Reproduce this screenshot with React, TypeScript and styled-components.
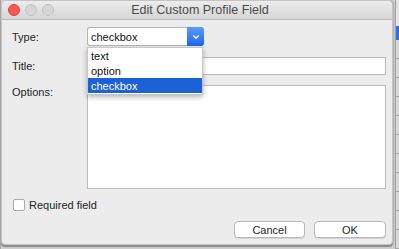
import { createGlobalStyle, styled } from 'styled-components';

const GlobalStyle = createGlobalStyle`
    html, body {
        margin: 0;
        padding: 0;
        width: 399px;
        height: 249px;
        overflow: hidden;
        background: #d6d6d6;
    }
    * {
        box-sizing: border-box;
    }
`;

const font = `'Liberation Sans', Arial, sans-serif`;

interface ItemProps {
    $selected?: boolean;
}

interface ButtonProps {
    $width: number;
}

const App = () => {
    return (
        <Desktop>
            <GlobalStyle />
            <Window>
                <TitleBar>
                    <Lights>
                        <Light color="#fc5753" edge="#de3f3b" />
                        <Light color="#d6d6d6" edge="#c2c2c2" />
                        <Light color="#d6d6d6" edge="#c2c2c2" />
                    </Lights>
                    <Title>Edit Custom Profile Field</Title>
                </TitleBar>

                <Body>
                    <Row>
                        <Label>Type:</Label>
                        <SelectWrap>
                            <Select>
                                <SelectValue>checkbox</SelectValue>
                                <SelectButton>
                                    <svg width="8" height="6" viewBox="0 0 8 6">
                                        <path d="M1.2 1.5 L4 4.3 L6.8 1.5" fill="none" stroke="white" strokeWidth="1.3" />
                                    </svg>
                                </SelectButton>
                            </Select>
                            <Menu>
                                <MenuItem>text</MenuItem>
                                <MenuItem>option</MenuItem>
                                <MenuItem $selected>checkbox</MenuItem>
                            </Menu>
                        </SelectWrap>
                    </Row>

                    <Row>
                        <Label>Title:</Label>
                        <TextInput />
                    </Row>

                    <AreaRow>
                        <AreaLabel>Options:</AreaLabel>
                        <TextArea />
                    </AreaRow>

                    <CheckRow>
                        <CheckBox />
                        <CheckLabel>Required field</CheckLabel>
                    </CheckRow>

                    <Buttons>
                        <PushButton $width={71}>Cancel</PushButton>
                        <PushButton $width={72}>OK</PushButton>
                    </Buttons>
                </Body>
            </Window>

            <BackStrip>
                <StripTop />
                <StripBlue />
                <StripLines />
            </BackStrip>
        </Desktop>
    );
};

export default App;

const Desktop = styled.div`
    display: flex;
    width: 399px;
    height: 249px;
    border-left: 1px solid #a8a8a8;
    background: #cfcfcf;
`;

const Window = styled.div`
    display: flex;
    flex-direction: column;
    width: 392px;
    height: 245px;
    background: #ececec;
    border-radius: 5px 5px 4px 4px;
    border: 1px solid #c4c4c4;
    box-shadow: 0 2px 1px #8a8a8a, 1px 0 2px #b0b0b0;
    overflow: hidden;
    flex-shrink: 0;
`;

const TitleBar = styled.div`
    position: relative;
    display: flex;
    align-items: center;
    justify-content: center;
    height: 19px;
    background: linear-gradient(to bottom, #ececec, #d6d6d6);
    border-bottom: 1px solid #b9b9b9;
`;

const Lights = styled.div`
    position: absolute;
    left: 6px;
    top: 3px;
    display: flex;
    gap: 5px;
`;

const Light = styled.div<{ color: string; edge: string }>`
    width: 12px;
    height: 12px;
    border-radius: 50%;
    background: ${(p) => p.color};
    border: 1px solid ${(p) => p.edge};
`;

const Title = styled.div`
    font-family: ${font};
    font-size: 12.5px;
    color: #4a4a4a;
    margin-left: 6px;
`;

const Body = styled.div`
    display: flex;
    flex-direction: column;
    padding: 7px 6px 0 10px;
    flex: 1;
`;

const Row = styled.div`
    display: flex;
    align-items: center;
    height: 19px;
    margin-bottom: 10px;
`;

const Label = styled.div`
    width: 75px;
    font-family: ${font};
    font-size: 11px;
    color: #1e1e1e;
`;

const SelectWrap = styled.div`
    position: relative;
    width: 117px;
    height: 19px;
`;

const Select = styled.div`
    display: flex;
    height: 19px;
    background: white;
    border: 1px solid #b5b5b5;
    border-right: none;
    border-radius: 3px;
`;

const SelectValue = styled.div`
    flex: 1;
    display: flex;
    align-items: center;
    padding-left: 3px;
    font-family: ${font};
    font-size: 11px;
    color: #111;
`;

const SelectButton = styled.div`
    display: flex;
    align-items: center;
    justify-content: center;
    width: 17px;
    margin: -1px 0;
    background: linear-gradient(to bottom, #5a9cfb, #1b66f0);
    border-radius: 0 3px 3px 0;
`;

const Menu = styled.div`
    position: absolute;
    top: 20px;
    left: 0;
    width: 116px;
    padding: 0 0 1px;
    background: white;
    border: 1px solid #c8c8c8;
    box-shadow: 0 2px 5px rgba(0, 0, 0, 0.3);
    z-index: 2;
`;

const MenuItem = styled.div<ItemProps>`
    height: 15px;
    display: flex;
    align-items: center;
    padding-left: 3px;
    font-family: ${font};
    font-size: 11px;
    color: ${(p) => (p.$selected ? 'white' : '#111')};
    background: ${(p) => (p.$selected ? '#1c62d6' : 'white')};
`;

const TextInput = styled.div`
    width: 299px;
    height: 18px;
    background: white;
    border: 1px solid #b8b8b8;
`;

const AreaRow = styled.div`
    display: flex;
    align-items: flex-start;
    margin-bottom: 10px;
`;

const AreaLabel = styled(Label)`
    padding-top: 1px;
`;

const TextArea = styled.div`
    width: 299px;
    height: 104px;
    background: white;
    border: 1px solid #bcbcbc;
`;

const CheckRow = styled.div`
    display: flex;
    align-items: center;
    gap: 4px;
    height: 12px;
    margin-left: 1px;
`;

const CheckBox = styled.div`
    width: 12px;
    height: 12px;
    background: white;
    border: 1px solid #a9a9a9;
    border-radius: 2px;
`;

const CheckLabel = styled.div`
    font-family: ${font};
    font-size: 11px;
    color: #1e1e1e;
`;

const Buttons = styled.div`
    display: flex;
    justify-content: flex-end;
    gap: 9px;
    margin-top: 10px;
`;

const PushButton = styled.div<ButtonProps>`
    display: flex;
    align-items: center;
    justify-content: center;
    width: ${(p) => p.$width}px;
    height: 17px;
    background: white;
    border: 1px solid #b8b8b8;
    border-radius: 4px;
    box-shadow: 0 1px 0 #d4d4d4;
    font-family: ${font};
    font-size: 11px;
    color: #1e1e1e;
`;

const BackStrip = styled.div`
    display: flex;
    flex-direction: column;
    flex: 1;
    border-left: 1px solid #a0a0a0;
    margin-left: 2px;
`;

const StripTop = styled.div`
    height: 26px;
    background: #e4e4e4;
`;

const StripBlue = styled.div`
    height: 14px;
    background: #2f6fd8;
`;

const StripLines = styled.div`
    flex: 1;
    background: repeating-linear-gradient(to bottom, #d8d8d8 0, #d8d8d8 18px, #a8a8a8 18px, #a8a8a8 19px);
`;
